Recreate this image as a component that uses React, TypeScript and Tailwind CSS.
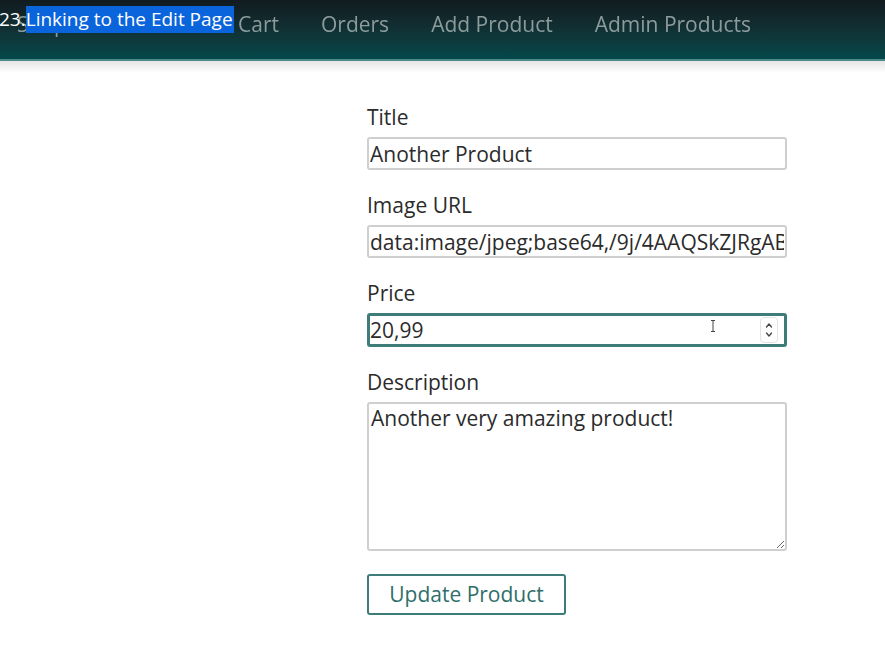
import { useState } from "react";

const NAV = ["Shop", "Products", "Cart", "Orders", "Add Product", "Admin Products"];

function Field({
  label,
  children,
}: {
  label: string;
  children: React.ReactNode;
}) {
  return (
    <div className="flex flex-col">
      <label className="mb-[8px] h-[24px] text-[21px] leading-[24px] text-[#2b2b2b]">
        {label}
      </label>
      {children}
    </div>
  );
}

export default function App() {
  const [title, setTitle] = useState("Another Product");
  const [image, setImage] = useState(
    "data:image/jpeg;base64,/9j/4AAQSkZJRgABAQAAAQABAAD",
  );
  const [price, setPrice] = useState("20,99");
  const [desc, setDesc] = useState("Another very amazing product!");

  return (
    <div
      className="relative h-[659px] w-[885px] overflow-hidden bg-white"
      style={{ fontFamily: '"Open Sans", "Noto Sans", sans-serif' }}
    >
      {/* top bar */}
      <header className="h-[61px] border-b-2 border-[#4d8a8a] bg-gradient-to-b from-[#111b20] to-[#03484a]">
        <nav className="flex h-[50px] items-center gap-[42px] pl-[17px] text-[21px] text-[#8c9c9c] blur-[0.3px]">
          {NAV.map((n) => (
            <span key={n}>{n}</span>
          ))}
        </nav>
      </header>
      <div className="h-[12px] bg-gradient-to-b from-[#e6e6e6] to-white" />

      {/* video chapter overlay */}
      <div className="absolute left-[-1px] top-[6px] flex h-[27px] items-center text-[19px] leading-[27px] text-white">
        <span>23.</span>
        <span className="bg-[#0a64dc] pr-[1px]">Linking to the Edit Page</span>
      </div>

      <form
        className="ml-[367px] mt-[32px] flex w-[420px] flex-col gap-[23px]"
        onSubmit={(e) => e.preventDefault()}
      >
        <Field label="Title">
          <input
            value={title}
            onChange={(e) => setTitle(e.target.value)}
            className="h-[33px] rounded-[3px] border-2 border-[#cfcfcf] px-[1px] text-[21px] text-[#2b2b2b] outline-none"
          />
        </Field>
        <Field label="Image URL">
          <input
            value={image}
            onChange={(e) => setImage(e.target.value)}
            className="h-[33px] rounded-[3px] border-2 border-[#cfcfcf] px-[1px] text-[21px] text-[#2b2b2b] outline-none"
          />
        </Field>
        <Field label="Price">
          <div className="relative">
            <input
              value={price}
              onChange={(e) => setPrice(e.target.value)}
              className="h-[34px] w-full rounded-[3px] border-[3px] border-[#3d7c78] px-0 text-[21px] text-[#2b2b2b] outline-none"
            />
            {/* mouse I-beam */}
            <svg
              className="absolute left-[343px] top-[7px]"
              width="6"
              height="12"
              viewBox="0 0 6 12"
            >
              <path d="M1 .5h4M1 11.5h4M3 .5v11" stroke="#444" strokeWidth="1" fill="none" />
            </svg>
            {/* spinner */}
            <div className="absolute right-[9px] top-[4px] flex h-[26px] w-[18px] flex-col items-center justify-center rounded-[4px] border border-[#e3e3e3]">
              <svg width="8" height="18" viewBox="0 0 8 18">
                <path
                  d="M1.5 6 4 3l2.5 3M1.5 12 4 15l2.5-3"
                  stroke="#444"
                  strokeWidth="1.3"
                  fill="none"
                  strokeLinecap="round"
                  strokeLinejoin="round"
                />
              </svg>
            </div>
          </div>
        </Field>
        <Field label="Description">
          <textarea
            value={desc}
            onChange={(e) => setDesc(e.target.value)}
            className="h-[149px] resize-y rounded-[3px] border-2 border-[#cfcfcf] px-[2px] pt-[1px] text-[21px] leading-[27px] text-[#2b2b2b] outline-none"
          />
        </Field>
        <div>
          <button
            type="submit"
            className="h-[41px] w-[199px] rounded-[3px] border-2 border-[#3d7c78] bg-white text-[21px] text-[#2f6e6b]"
          >
            Update Product
          </button>
        </div>
      </form>
    </div>
  );
}
